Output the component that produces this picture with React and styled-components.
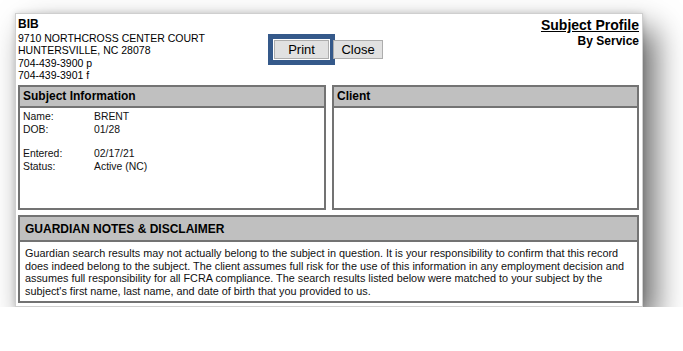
import styled, { createGlobalStyle } from "styled-components";

const GlobalStyle = createGlobalStyle`
  html, body {
    margin: 0;
    padding: 0;
    background: #ffffff;
  }
  body {
    font-family: "Liberation Sans", Arial, sans-serif;
    color: #000;
  }
`;

const Page = styled.div`
  box-sizing: border-box;
  width: 628px;
  height: 294px;
  margin: 13px 0 0 15px;
  padding: 3px 3px 0 2px;
  background: #fff;
  border: 1px solid #cfcfcf;
  box-shadow: 12px 16px 30px rgba(0, 0, 0, 0.6), 0 0 6px rgba(0, 0, 0, 0.15);
`;

const Header = styled.div`
  display: grid;
  grid-template-columns: 1fr auto 1fr;
  align-items: start;
  height: 68px;
`;

const Company = styled.div`
  font-size: 10.5px;
  line-height: 12.4px;
`;

const CompanyName = styled.div`
  font-size: 12px;
  font-weight: bold;
  line-height: 15px;
`;

const ButtonBar = styled.div`
  display: flex;
  gap: 4px;
  align-self: center;
  margin-top: -4px;
`;

const Button = styled.button`
  box-sizing: border-box;
  width: ${(p) => p.$w}px;
  height: 19px;
  padding: 0;
  font-family: "Liberation Sans", Arial, sans-serif;
  font-size: 13px;
  line-height: 17px;
  color: #000;
  background: #e1e1e1;
  border: 1px solid #adadad;
  outline: ${(p) => (p.$focus ? "5px solid #35598a" : "none")};
  outline-offset: 1px;
`;

const Title = styled.div`
  text-align: right;
  font-weight: bold;
`;

const TitleMain = styled.div`
  font-size: 14px;
  line-height: 16px;
  text-decoration: underline;
`;

const TitleSub = styled.div`
  font-size: 12px;
  line-height: 16px;
`;

const Columns = styled.div`
  display: grid;
  grid-template-columns: 308px 307px;
  gap: 6px;
`;

const Panel = styled.div`
  box-sizing: border-box;
  border: 2px solid #737373;
  margin-top: ${(p) => p.$top || 0}px;
`;

const PanelHead = styled.div`
  background: #c0c0c0;
  border-bottom: 2px solid #737373;
  font-size: 12px;
  font-weight: bold;
  line-height: 19px;
  padding: ${(p) => (p.$wide ? "6px 5px 4px" : "0 3px")};
  ${(p) => p.$wide && "line-height: 13px;"}
`;

const PanelBody = styled.div`
  height: ${(p) => p.$h}px;
  box-sizing: border-box;
  padding: ${(p) => (p.$wide ? "5px 5px 4px" : "3px 3px")};
  font-size: ${(p) => (p.$wide ? 10.85 : 10.4)}px;
  line-height: 12.5px;
  color: #111;
`;

const InfoGrid = styled.div`
  display: grid;
  grid-template-columns: 71px 1fr;
`;

const Spacer = styled.div`
  grid-column: 1 / -1;
  height: 12px;
`;

const info = [
  ["Name:", "BRENT"],
  ["DOB:", "01/28"],
  null,
  ["Entered:", "02/17/21"],
  ["Status:", "Active (NC)"],
];

export default function App() {
  return (
    <>
      <GlobalStyle />
      <Page>
        <Header>
          <div>
            <CompanyName>BIB</CompanyName>
            <Company>
              9710 NORTHCROSS CENTER COURT
              <br />
              HUNTERSVILLE, NC 28078
              <br />
              704-439-3900 p
              <br />
              704-439-3901 f
            </Company>
          </div>
          <ButtonBar>
            <Button $w={55} $focus>
              Print
            </Button>
            <Button $w={50}>Close</Button>
          </ButtonBar>
          <Title>
            <TitleMain>Subject Profile</TitleMain>
            <TitleSub>By Service</TitleSub>
          </Title>
        </Header>

        <Columns>
          <Panel>
            <PanelHead>Subject Information</PanelHead>
            <PanelBody $h={100}>
              <InfoGrid>
                {info.map((row, i) =>
                  row ? (
                    <>
                      <div key={`l${i}`}>{row[0]}</div>
                      <div key={`v${i}`}>{row[1]}</div>
                    </>
                  ) : (
                    <Spacer key={i} />
                  )
                )}
              </InfoGrid>
            </PanelBody>
          </Panel>
          <Panel>
            <PanelHead>Client</PanelHead>
            <PanelBody $h={100} />
          </Panel>
        </Columns>

        <Panel $top={5}>
          <PanelHead $wide>GUARDIAN NOTES &amp; DISCLAIMER</PanelHead>
          <PanelBody $wide>
            Guardian search results may not actually belong to the subject in question. It is your responsibility to
            confirm that this record does indeed belong to the subject. The client assumes full risk for the use of
            this information in any employment decision and assumes full responsibility for all FCRA compliance. The
            search results listed below were matched to your subject by the subject's first name, last name, and date
            of birth that you provided to us.
          </PanelBody>
        </Panel>
      </Page>
    </>
  );
}
